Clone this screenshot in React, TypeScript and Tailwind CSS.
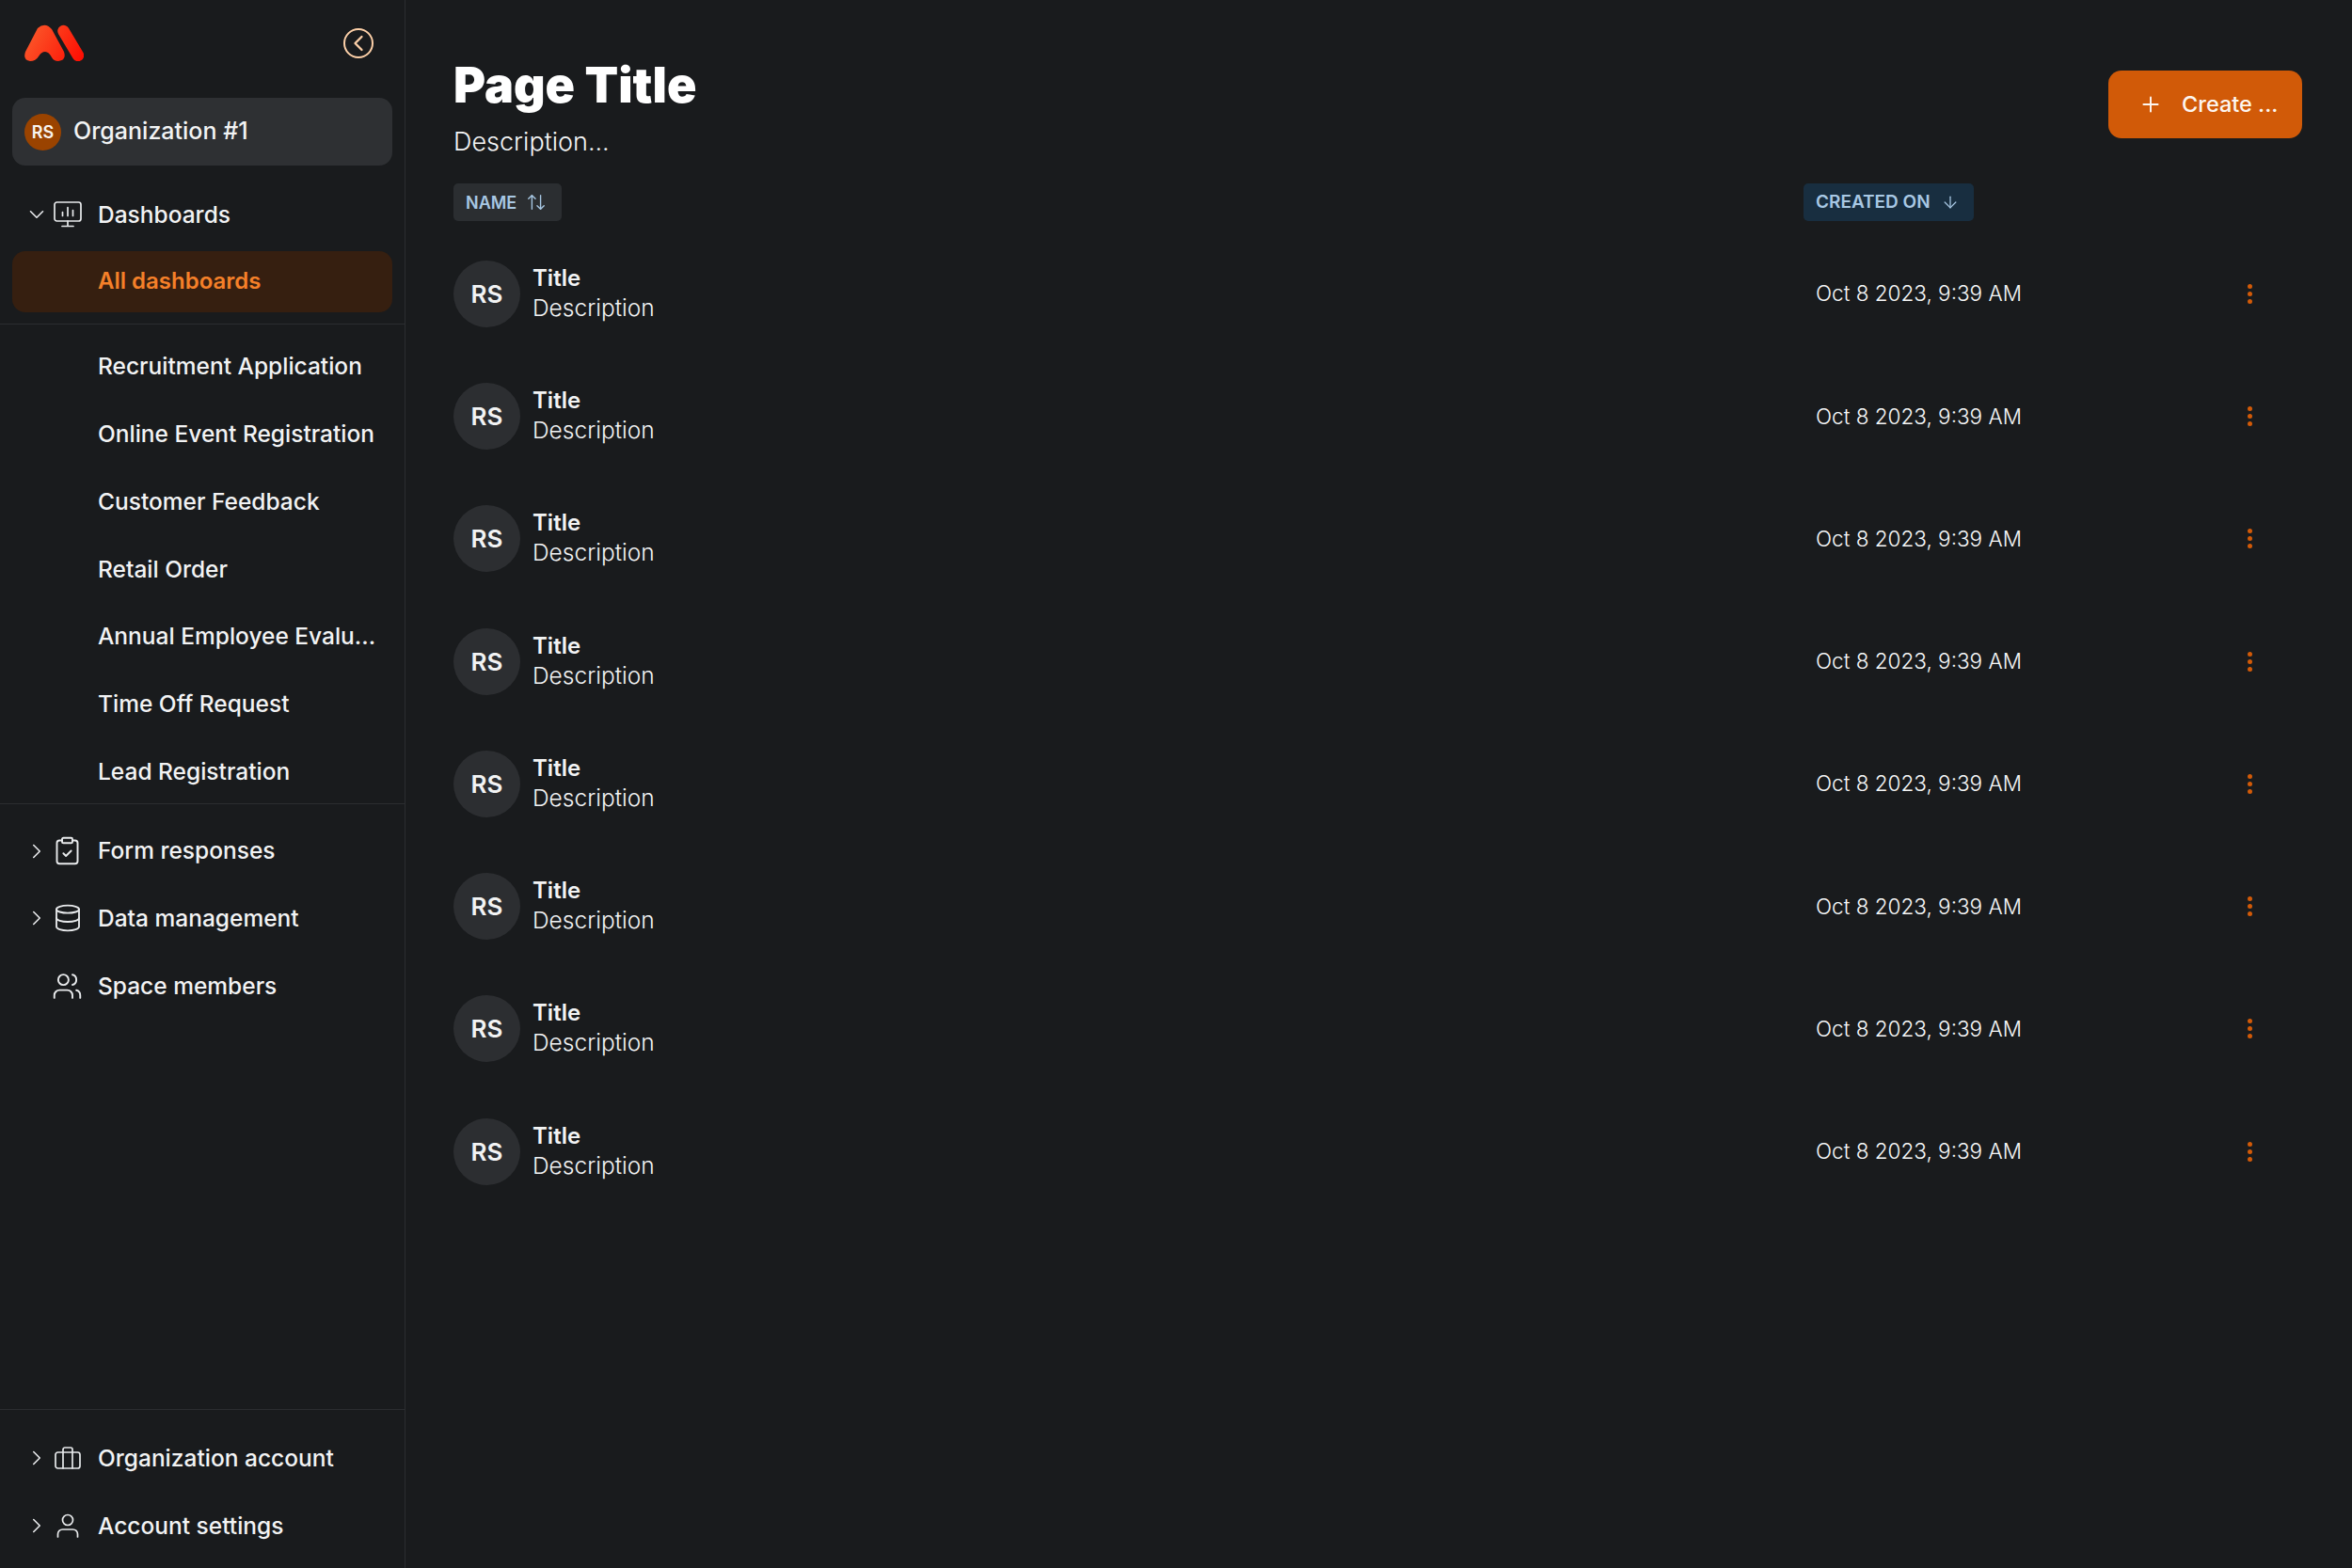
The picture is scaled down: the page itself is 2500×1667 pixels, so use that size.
import React from 'react';
import { ArrowDown, ArrowUpDown, ChevronDown, ChevronLeft, ChevronRight, ClipboardCheck, Database, Plus, Users } from 'lucide-react';

const font = 'font-["Inter","Liberation_Sans",sans-serif]';

const dashboards = [
  'Recruitment Application',
  'Online Event Registration',
  'Customer Feedback',
  'Retail Order',
  'Annual Employee Evalu...',
  'Time Off Request',
  'Lead Registration',
];

function Logo() {
  return (
    <svg width="63" height="39" viewBox="26 26 63 39" fill="none">
      <defs>
        <linearGradient id="logoFill" x1="30" y1="30" x2="88" y2="62" gradientUnits="userSpaceOnUse">
          <stop offset="0" stopColor="#fb5a2b" />
          <stop offset="1" stopColor="#fd0d02" />
        </linearGradient>
      </defs>
      <path
        d="M40 30 Q48 23 55 31 L68 55 Q71 64 62 65 Q57 65 55 61 Q52 55 48 55 Q44 55 41 60 Q38 65 32 65 Q24 64 27 55 Z"
        fill="url(#logoFill)"
      />
      <path d="M67.500 33 L83 59" stroke="url(#logoFill)" strokeWidth="12.500" strokeLinecap="round" />
    </svg>
  );
}

function MonitorIcon() {
  return (
    <svg width="30" height="28" viewBox="0 0 30 28" fill="none" stroke="#e8eaec" strokeWidth="1.700" strokeLinecap="round" strokeLinejoin="round">
      <rect x="1" y="1" width="28" height="20" rx="2.500" />
      <path d="M15 21v5M9 26.500h12M9.500 11.500v4M15 6.500v9M20.500 9.500v6" />
    </svg>
  );
}

function CaseIcon() {
  return (
    <svg width="28" height="24" viewBox="0 0 28 24" fill="none" stroke="#e8eaec" strokeWidth="1.700" strokeLinecap="round" strokeLinejoin="round">
      <rect x="1" y="6" width="26" height="17" rx="2.500" />
      <path d="M9 6V3a2 2 0 0 1 2-2h6a2 2 0 0 1 2 2v3M9 6v17M19 6v17" />
    </svg>
  );
}

function PersonIcon() {
  return (
    <svg width="24" height="26" viewBox="0 0 24 26" fill="none" stroke="#e8eaec" strokeWidth="1.700" strokeLinecap="round">
      <circle cx="12" cy="7" r="5.500" />
      <path d="M1.500 25v-3a5 5 0 0 1 5-5h11a5 5 0 0 1 5 5v3" />
    </svg>
  );
}

function NavRow({ label, icon, arrow }: { label: string; icon: React.ReactNode; arrow?: 'right' | 'down' }) {
  return (
    <div className="flex h-[71.750px] items-center pl-[30px]">
      <div className="flex w-[18px] justify-center">
        {arrow === 'right' && <ChevronRight size={26} strokeWidth={1.500} className="shrink-0 text-[#e8eaec]" />}
        {arrow === 'down' && <ChevronDown size={26} strokeWidth={1.500} className="shrink-0 text-[#e8eaec]" />}
      </div>
      <div className="ml-[7px] flex w-[33px] justify-center">{icon}</div>
      <span className="ml-[16px] text-[24.500px] font-[550] text-[#f2f3f4]">{label}</span>
    </div>
  );
}

function TableRow() {
  return (
    <div className="flex h-[130.300px] items-center">
      <div className="flex h-[71px] w-[71px] items-center justify-center rounded-full bg-[#2c2e31] text-[26px] font-semibold text-[#f2f3f4]">
        RS
      </div>
      <div className="ml-[13px] -mt-[2px] flex w-[1364px] flex-col gap-[3px]">
        <span className="text-[24px] leading-[29px] font-semibold text-[#f2f3f4]">Title</span>
        <span className="text-[24.500px] leading-[29px] font-[350] text-[#f2f3f4]">Description</span>
      </div>
      <span className="w-[459px] text-[22.500px] font-[350] text-[#f6f7f8]">Oct 8 2023, 9:39 AM</span>
      <div className="flex flex-col gap-[3px]">
        <span className="h-[5px] w-[5px] rounded-full bg-[#d15a08]" />
        <span className="h-[5px] w-[5px] rounded-full bg-[#d15a08]" />
        <span className="h-[5px] w-[5px] rounded-full bg-[#d15a08]" />
      </div>
    </div>
  );
}

export default function App() {
  return (
    <div className={`flex h-[1667px] w-[2500px] overflow-hidden bg-[#191b1d] ${font}`}>
      <aside className="flex w-[431px] shrink-0 flex-col border-r border-[#2b2d30]">
        <div className="flex h-[104px] items-start justify-between pt-[26px] pr-[33px] pl-[26px]">
          <Logo />
          <div className="mt-[4px] flex h-[32px] w-[32px] items-center justify-center rounded-full border-2 border-[#fdd0a8]">
            <ChevronLeft size={28} strokeWidth={2} className="shrink-0 text-[#fdd0a8]" />
          </div>
        </div>
        <div className="mx-[13px] flex h-[72px] items-center rounded-[14px] bg-[#2e3033] pl-[13px]">
          <div className="flex h-[39px] w-[39px] items-center justify-center rounded-full bg-[#9a4300] text-[18px] font-semibold text-[#f8f3ee]">
            RS
          </div>
          <span className="ml-[13px] text-[25px] font-[550] text-[#f2f3f4]">Organization #1</span>
        </div>
        <div className="mt-[16px]">
          <NavRow label="Dashboards" arrow="down" icon={<MonitorIcon />} />
        </div>
        <div className="mx-[13px] mt-[3px] flex h-[65px] items-center rounded-[14px] bg-[#361f10] pl-[91px] text-[24px] font-semibold text-[#f58029]">
          All dashboards
        </div>
        <div className="mt-[12px] h-[511px] border-y border-[#2b2d30] pt-[9px]">
          {dashboards.map((name) => (
            <div key={name} className="flex h-[71.750px] items-center pl-[104px] text-[24.500px] font-[550] whitespace-nowrap text-[#f2f3f4]">
              {name}
            </div>
          ))}
        </div>
        <div className="pt-[14px]">
          <NavRow label="Form responses" arrow="right" icon={<ClipboardCheck size={33} strokeWidth={1.400} className="shrink-0 text-[#e8eaec]" />} />
          <NavRow label="Data management" arrow="right" icon={<Database size={32} strokeWidth={1.400} className="shrink-0 text-[#e8eaec]" />} />
          <NavRow label="Space members" icon={<Users size={33} strokeWidth={1.400} className="shrink-0 text-[#e8eaec]" />} />
        </div>
        <div className="mt-auto border-t border-[#2b2d30] pt-[16px] pb-[9px]">
          <NavRow label="Organization account" arrow="right" icon={<CaseIcon />} />
          <NavRow label="Account settings" arrow="right" icon={<PersonIcon />} />
        </div>
      </aside>
      <main className="min-w-0 flex-1 pt-[55px] pl-[51px]">
        <div className="flex items-start justify-between pr-[53px]">
          <div>
            <h1 className="text-[52px] leading-[72px] font-black text-white">Page Title</h1>
            <p className="mt-[5px] text-[27px] leading-[38px] font-[350] text-[#f4f5f6]">Description...</p>
          </div>
          <button className="mt-[20px] flex h-[72px] w-[206px] items-center gap-[20px] rounded-[14px] bg-[#d15a08] pl-[32px] text-[23.500px] font-[550] text-[#fdf6f0]">
            <Plus size={26} strokeWidth={1.800} />
            Create ...
          </button>
        </div>
        <div className="mt-[25px] flex">
          <div className="flex h-[40px] w-[115px] items-center gap-[10px] rounded-[5px] bg-[#2b2e31] pl-[13px] text-[18px] font-semibold text-[#a8c8e4]">
            NAME
            <ArrowUpDown size={22} strokeWidth={1.500} />
          </div>
          <div className="ml-[1320px] flex h-[40px] w-[181px] items-center gap-[11px] rounded-[5px] bg-[#182e40] pl-[13px] text-[19px] font-semibold whitespace-nowrap text-[#a8c8e4]">
            CREATED ON
            <ArrowDown size={20} strokeWidth={1.500} />
          </div>
        </div>
        <div className="mt-[12px]">
          {Array.from({ length: 8 }).map((_, i) => (
            <TableRow key={i} />
          ))}
        </div>
      </main>
    </div>
  );
}
